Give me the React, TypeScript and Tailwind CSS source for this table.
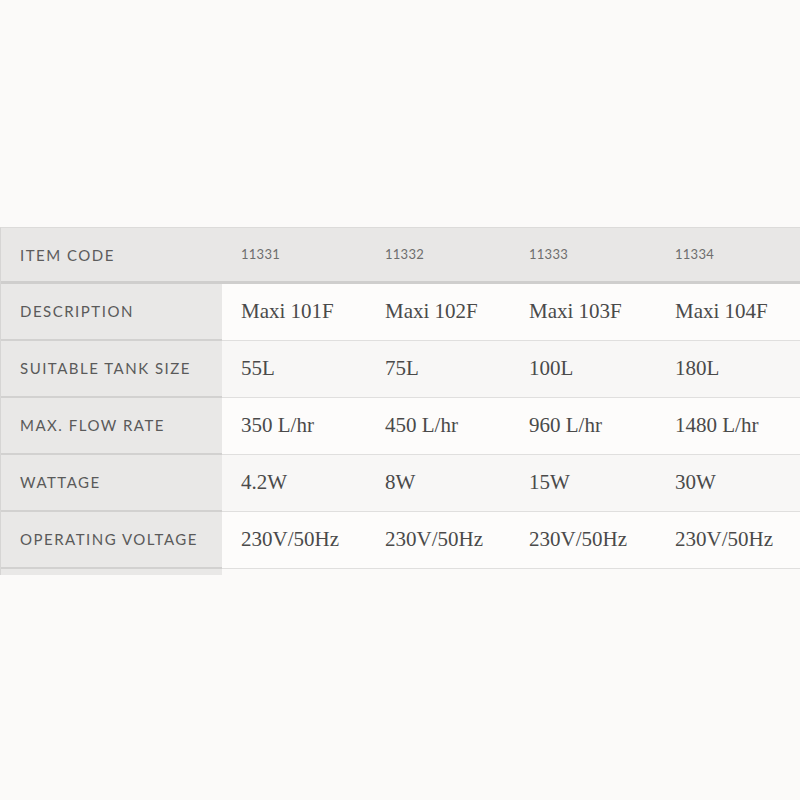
import React from "react";

const codes = ["11331", "11332", "11333", "11334"];
const rows: { label: string; values: string[]; alt?: boolean }[] = [
  { label: "DESCRIPTION", values: ["Maxi 101F", "Maxi 102F", "Maxi 103F", "Maxi 104F"] },
  { label: "SUITABLE TANK SIZE", values: ["55L", "75L", "100L", "180L"], alt: true },
  { label: "MAX. FLOW RATE", values: ["350 L/hr", "450 L/hr", "960 L/hr", "1480 L/hr"] },
  { label: "WATTAGE", values: ["4.2W", "8W", "15W", "30W"], alt: true },
  { label: "OPERATING VOLTAGE", values: ["230V/50Hz", "230V/50Hz", "230V/50Hz", "230V/50Hz"] },
];

const cols = "grid grid-cols-[221px_144px_144px_146px_145px]";

export default function App() {
  return (
    <div className="w-[800px] h-[800px] bg-[#fbfaf9] overflow-hidden">
      <div className="h-[227px]" />
      <div className="border-t border-[#dcdbda] border-l border-l-[#d6d5d4]">
        {/* header */}
        <div className={`${cols} h-[56px] bg-[#e8e7e6] border-b-[3px] border-[#cfcecd] items-center`}>
          <div className="pl-[19px] pt-[1px] text-[15px] tracking-[0.1em] text-[#5c5c5c] font-['Lato','Liberation_Sans',sans-serif]">
            ITEM CODE
          </div>
          {codes.map((c) => (
            <div
              key={c}
              className="pl-[19px] pt-[1px] text-[13px] tracking-[0.02em] text-[#6e6e6e] font-['Lato','Liberation_Sans',sans-serif]"
            >
              {c}
            </div>
          ))}
        </div>
        {rows.map((r) => (
          <div key={r.label} className={`${cols} h-[57px]`}>
            <div className="flex items-center pl-[19px] bg-[#e9e8e7] border-b-[2px] border-[#d2d1d0] text-[15px] tracking-[0.1em] text-[#5a5a5a] font-['Lato','Liberation_Sans',sans-serif]">
              {r.label}
            </div>
            {r.values.map((v, i) => (
              <div
                key={i}
                className={`flex items-center pl-[19px] border-b border-[#e0dfde] text-[21px] text-[#4a4a4a] font-['Liberation_Serif',serif] ${
                  r.alt ? "bg-[#f8f7f6]" : "bg-[#fdfcfb]"
                }`}
              >
                {v}
              </div>
            ))}
          </div>
        ))}
        <div className={`${cols} h-[6px]`}>
          <div className="bg-[#e9e8e7]" />
          <div className="col-span-4 bg-[#fbfaf9]" />
        </div>
      </div>
    </div>
  );
}
